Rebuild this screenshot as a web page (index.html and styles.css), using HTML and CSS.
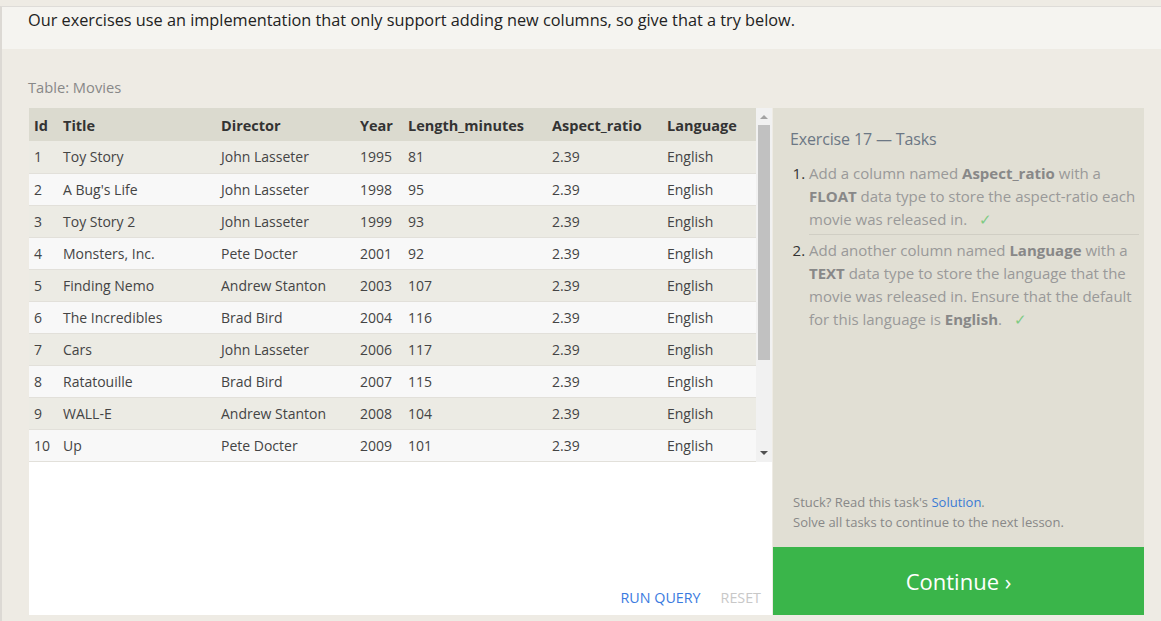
FILE: index.html
```html
<!DOCTYPE html>
<html>
<head>
<meta charset="utf-8">
<link rel="stylesheet" href="styles.css">
</head>
<body>
<div class="page">
  <div class="intro">Our exercises use an implementation that only support adding new columns, so give that a try below.</div>
  <div class="exercise">
    <div class="table-label">Table: Movies</div>
    <div class="workspace">
      <div class="query-pane">
        <div class="results">
          <table class="movies">
            <colgroup>
              <col style="width:29px"><col style="width:158px"><col style="width:139px"><col style="width:48px"><col style="width:144px"><col style="width:115px"><col style="width:94px">
            </colgroup>
            <thead>
              <tr><th>Id</th><th>Title</th><th>Director</th><th>Year</th><th>Length_minutes</th><th>Aspect_ratio</th><th>Language</th></tr>
            </thead>
            <tbody>
              <tr><td>1</td><td>Toy Story</td><td>John Lasseter</td><td>1995</td><td>81</td><td>2.39</td><td>English</td></tr>
              <tr><td>2</td><td>A Bug's Life</td><td>John Lasseter</td><td>1998</td><td>95</td><td>2.39</td><td>English</td></tr>
              <tr><td>3</td><td>Toy Story 2</td><td>John Lasseter</td><td>1999</td><td>93</td><td>2.39</td><td>English</td></tr>
              <tr><td>4</td><td>Monsters, Inc.</td><td>Pete Docter</td><td>2001</td><td>92</td><td>2.39</td><td>English</td></tr>
              <tr><td>5</td><td>Finding Nemo</td><td>Andrew Stanton</td><td>2003</td><td>107</td><td>2.39</td><td>English</td></tr>
              <tr><td>6</td><td>The Incredibles</td><td>Brad Bird</td><td>2004</td><td>116</td><td>2.39</td><td>English</td></tr>
              <tr><td>7</td><td>Cars</td><td>John Lasseter</td><td>2006</td><td>117</td><td>2.39</td><td>English</td></tr>
              <tr><td>8</td><td>Ratatouille</td><td>Brad Bird</td><td>2007</td><td>115</td><td>2.39</td><td>English</td></tr>
              <tr><td>9</td><td>WALL-E</td><td>Andrew Stanton</td><td>2008</td><td>104</td><td>2.39</td><td>English</td></tr>
              <tr><td>10</td><td>Up</td><td>Pete Docter</td><td>2009</td><td>101</td><td>2.39</td><td>English</td></tr>
            </tbody>
          </table>
          <div class="scrollbar">
            <div class="arrow up"></div>
            <div class="track"><div class="thumb"></div></div>
            <div class="arrow down"></div>
          </div>
        </div>
        <div class="editor"></div>
        <div class="actions">
          <span class="run">RUN QUERY</span>
          <span class="reset">RESET</span>
        </div>
      </div>
      <div class="tasks-pane">
        <div class="tasks">
          <h3 class="tasks-title">Exercise 17 — Tasks</h3>
          <ol class="task-list">
            <li>Add a column named <b>Aspect_ratio</b> with a <b>FLOAT</b> data type to store the aspect-ratio each movie was released in. <span class="check">✓</span></li>
            <li>Add another column named <b>Language</b> with a <b>TEXT</b> data type to store the language that the movie was released in. Ensure that the default for this language is <b>English</b>. <span class="check">✓</span></li>
          </ol>
        </div>
        <div class="help">
          <div>Stuck? Read this task's <span class="link">Solution</span>.</div>
          <div>Solve all tasks to continue to the next lesson.</div>
        </div>
        <div class="continue">Continue ›</div>
      </div>
    </div>
  </div>
</div>
</body>
</html>
```

FILE: styles.css
```css
* { box-sizing: border-box; }
html, body { margin: 0; padding: 0; }
body {
  font-family: "Open Sans", "Liberation Sans", sans-serif;
  background: #eeebe4;
  width: 1161px;
  height: 621px;
  overflow: hidden;
}
.page {
  margin-top: 6px;
  border-top: 1px solid #dedcd8;
  border-left: 2px solid #dcd9d4;
  min-height: 615px;
  background: #eeebe4;
}
.intro {
  background: #f5f4f0;
  height: 42px;
  padding: 1px 0 0 26px;
  font-size: 16.3px;
  line-height: 24px;
  color: #222;
}
.exercise {
  padding: 28px 17px 0 27px;
}
.table-label {
  font-size: 14.7px;
  color: #888;
  line-height: 20px;
  margin: 0 0 11px -1px;
}
.workspace {
  display: flex;
  height: 507px;
}
.query-pane {
  width: 743px;
  background: #fff;
  display: flex;
  flex-direction: column;
}
.results {
  display: flex;
  height: 354px;
}
.movies {
  border-collapse: collapse;
  table-layout: fixed;
  width: 727px;
  font-size: 14px;
}
.movies th {
  background: #dbdacf;
  color: #333;
  font-weight: 700;
  text-align: left;
  height: 33px;
  padding: 1px 0 0 5px;
  font-size: 14.5px;
}
.movies td {
  color: #444;
  height: 32px;
  padding: 0 0 0 5px;
  border-bottom: 1px solid #e2e0da;
  white-space: nowrap;
}
.movies tbody tr:nth-child(odd) td { background: #ecebe4; }
.movies tbody tr:nth-child(even) td { background: #f8f8f8; }
.scrollbar {
  width: 16px;
  background: #f1f1f1;
  display: flex;
  flex-direction: column;
}
.arrow {
  height: 17px;
  display: flex;
  align-items: center;
  justify-content: center;
}
.arrow.up::before {
  content: "";
  border-left: 4px solid transparent;
  border-right: 4px solid transparent;
  border-bottom: 4px solid #a3a3a3;
}
.arrow.down::before {
  content: "";
  border-left: 4px solid transparent;
  border-right: 4px solid transparent;
  border-top: 4px solid #505050;
}
.track {
  flex: 1;
  padding: 0 2px;
}
.thumb {
  height: 235px;
  background: #c1c1c1;
}
.arrow.down { height: 24px; padding-top: 6px; }
.editor { flex: 1; }
.actions {
  display: flex;
  justify-content: flex-end;
  gap: 20px;
  padding: 0 11px 8px 0;
  font-size: 14.3px;
}
.run { color: #3a7be0; }
.reset { color: #c8c8c8; }
.tasks-pane {
  width: 371px;
  margin-left: 1px;
  background: #e1dfd4;
  display: flex;
  flex-direction: column;
}
.tasks {
  flex: 1;
  padding: 18px 5px 0 17px;
}
.tasks-title {
  margin: 0 0 10px;
  font-weight: 400;
  font-size: 16px;
  line-height: 26px;
  color: #6c7784;
  letter-spacing: -0.15px;
}
.task-list {
  margin: 0;
  padding: 0 0 0 19px;
  font-size: 15px;
  line-height: 23px;
  color: #999;
}
.task-list li {
  padding-bottom: 3px;
}
.task-list li + li {
  border-top: 1px solid #d0cec4;
  padding-top: 4px;
}
.task-list li::marker { color: #333; }
.task-list b { color: #888; font-weight: 700; }
.check { color: #7ecb83; margin-left: 8px; }
.help {
  padding: 0 0 15px 20px;
  font-size: 13px;
  line-height: 20px;
  color: #888;
}
.link { color: #3a7bd5; }
.continue {
  height: 68px;
  background: #3ab54a;
  color: #fff;
  font-size: 22px;
  display: flex;
  align-items: center;
  justify-content: center;
}
```
